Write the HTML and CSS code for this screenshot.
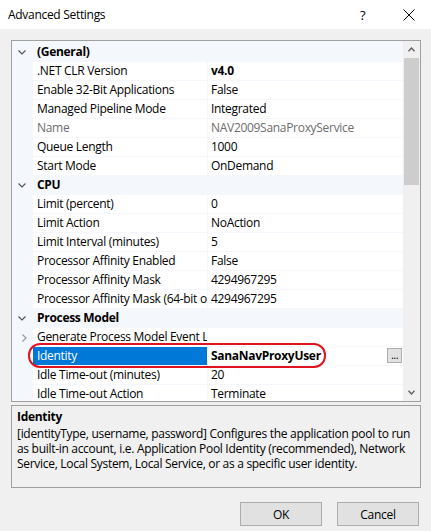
FILE: index.html
```html
<!DOCTYPE html>
<html>
<head>
<meta charset="utf-8">
<link rel="stylesheet" href="styles.css">
</head>
<body>
<div class="window">
  <div class="titlebar">
    <span class="title">Advanced Settings</span>
    <span class="help">?</span>
    <svg class="close" width="12" height="12" viewBox="0 0 12 12"><path d="M0.5 0.5 L11.5 11.5 M11.5 0.5 L0.5 11.5" stroke="#000" stroke-width="1" fill="none"/></svg>
  </div>
  <div class="content">
    <div class="grid-box">
      <div class="rows">
        <div class="row cat"><span class="glyph"><svg width="8" height="5" viewBox="0 0 8 5"><path d="M0.5 0.5 L4 4 L7.5 0.5" stroke="#555" stroke-width="1.2" fill="none"/></svg></span><span class="cat-name">(General)</span></div>
        <div class="row"><span class="glyph"></span><span class="name">.NET CLR Version</span><span class="val bold">v4.0</span></div>
        <div class="row"><span class="glyph"></span><span class="name">Enable 32-Bit Applications</span><span class="val">False</span></div>
        <div class="row"><span class="glyph"></span><span class="name">Managed Pipeline Mode</span><span class="val">Integrated</span></div>
        <div class="row disabled"><span class="glyph"></span><span class="name">Name</span><span class="val">NAV2009SanaProxyService</span></div>
        <div class="row"><span class="glyph"></span><span class="name">Queue Length</span><span class="val">1000</span></div>
        <div class="row"><span class="glyph"></span><span class="name">Start Mode</span><span class="val">OnDemand</span></div>
        <div class="row cat"><span class="glyph"><svg width="8" height="5" viewBox="0 0 8 5"><path d="M0.5 0.5 L4 4 L7.5 0.5" stroke="#555" stroke-width="1.2" fill="none"/></svg></span><span class="cat-name">CPU</span></div>
        <div class="row"><span class="glyph"></span><span class="name">Limit (percent)</span><span class="val">0</span></div>
        <div class="row"><span class="glyph"></span><span class="name">Limit Action</span><span class="val">NoAction</span></div>
        <div class="row"><span class="glyph"></span><span class="name">Limit Interval (minutes)</span><span class="val">5</span></div>
        <div class="row"><span class="glyph"></span><span class="name">Processor Affinity Enabled</span><span class="val">False</span></div>
        <div class="row"><span class="glyph"></span><span class="name">Processor Affinity Mask</span><span class="val">4294967295</span></div>
        <div class="row"><span class="glyph"></span><span class="name">Processor Affinity Mask (64-bit option)</span><span class="val">4294967295</span></div>
        <div class="row cat"><span class="glyph"><svg width="8" height="5" viewBox="0 0 8 5"><path d="M0.5 0.5 L4 4 L7.5 0.5" stroke="#555" stroke-width="1.2" fill="none"/></svg></span><span class="cat-name">Process Model</span></div>
        <div class="row"><span class="glyph"><svg class="expand" width="5" height="8" viewBox="0 0 5 8"><path d="M0.5 0.5 L4 4 L0.5 7.5" stroke="#999" stroke-width="1.2" fill="none"/></svg></span><span class="name">Generate Process Model Event Log Entry</span><span class="val"></span></div>
        <div class="row selected"><span class="glyph"></span><span class="name">Identity</span><span class="val bold">SanaNavProxyUser<span class="dots">...</span></span></div>
        <div class="row"><span class="glyph"></span><span class="name">Idle Time-out (minutes)</span><span class="val">20</span></div>
        <div class="row"><span class="glyph"></span><span class="name">Idle Time-out Action</span><span class="val">Terminate</span></div>
      </div>
      <div class="scrollbar">
        <div class="arrow"><svg width="7" height="5" viewBox="0 0 7 5"><path d="M0.5 4.2 L3.5 1 L6.5 4.2" stroke="#606060" stroke-width="1.4" fill="none"/></svg></div>
        <div class="track"><div class="thumb"></div></div>
        <div class="arrow"><svg width="7" height="5" viewBox="0 0 7 5"><path d="M0.5 0.8 L3.5 4 L6.5 0.8" stroke="#606060" stroke-width="1.4" fill="none"/></svg></div>
      </div>
      <div class="highlight"></div>
    </div>
    <div class="desc">
      <div class="desc-title">Identity</div>
      <div class="desc-text">[identityType, username, password] Configures the application pool to run<br>as built-in account, i.e. Application Pool Identity (recommended), Network<br>Service, Local System, Local Service, or as a specific user identity.</div>
    </div>
    <div class="buttons">
      <button class="btn">OK</button>
      <button class="btn">Cancel</button>
    </div>
  </div>
</div>
</body>
</html>
```

FILE: styles.css
```css
* { box-sizing: border-box; }
html, body { margin: 0; padding: 0; }
body {
  width: 431px;
  height: 531px;
  background: #f0f0f0;
  font-family: "Open Sans", "Noto Sans", sans-serif;
  font-size: 12px;
  color: #000;
  overflow: hidden;
  letter-spacing: -0.3px;
}
.window { width: 431px; height: 531px; display: flex; flex-direction: column; }
.titlebar {
  height: 29px;
  background: #fff;
  display: flex;
  align-items: center;
  padding-left: 8px;
  position: relative;
}
.title { font-size: 12px; flex: 1; }
.help { font-size: 13px; width: 14px; margin-right: 29px; }
.close { margin-right: 16px; }
.content { padding: 11px 10px 0 11px; display: flex; flex-direction: column; }
.grid-box {
  height: 362px;
  border: 1px solid #a0a0a0;
  background: #f4f7fc;
  display: flex;
  position: relative;
}
.rows {
  width: 391px;
  padding-top: 2px;
  overflow: hidden;
  display: flex;
  flex-direction: column;
}
.row {
  height: 19px;
  flex: none;
  display: flex;
}
.glyph {
  width: 21px;
  flex: none;
  display: flex;
  align-items: center;
  justify-content: center;
  height: 19px;
}
.row.cat .glyph { padding-bottom: 1px; justify-content: flex-start; padding-left: 6px; }
.glyph .expand { margin-left: 3px; }
.cat-name { font-weight: bold; padding-left: 4px; line-height: 18px; }
.name {
  width: 174px;
  flex: none;
  background: #fff;
  height: 18px;
  line-height: 18px;
  padding-left: 4px;
  white-space: nowrap;
  overflow: hidden;
}
.val {
  flex: 1;
  background: #fff;
  height: 18px;
  line-height: 18px;
  border-left: 1px solid #f4f7fc;
  padding-left: 3px;
  white-space: nowrap;
  overflow: hidden;
  position: relative;
}
.bold { font-weight: bold; }
.disabled .name, .disabled .val { color: #6d6d6d; }
.selected .name { background: #0078d7; color: #fff; }
.dots {
  position: absolute;
  right: 1px;
  top: 1px;
  width: 15px;
  height: 15px;
  background: #e1e1e1;
  border: 1px solid #adadad;
  font-weight: normal;
  font-size: 11px;
  line-height: 11px;
  text-align: center;
  letter-spacing: -0.5px;
}
.scrollbar {
  width: 17px;
  background: #f0f0f0;
  display: flex;
  flex-direction: column;
}
.arrow { height: 17px; display: flex; align-items: center; justify-content: center; }
.track { flex: 1; }
.thumb { height: 127px; margin: 0 1px; background: #cdcdcd; }
.highlight {
  position: absolute;
  left: 16px;
  top: 302px;
  width: 298px;
  height: 25px;
  border: 2px solid #e0141e;
  border-radius: 12px;
  pointer-events: none;
}
.desc {
  margin-top: 3px;
  height: 83px;
  border: 1px solid #a0a0a0;
  background: #f0f0f0;
  padding: 3px 5px 0 5px;
}
.desc-title { font-weight: bold; line-height: 15px; }
.desc-text { line-height: 15px; margin-top: 2px; white-space: nowrap; }
.buttons {
  margin-top: 14px;
  display: flex;
  justify-content: flex-end;
  gap: 15px;
  padding-right: 2px;
}
.btn {
  width: 82px;
  height: 24px;
  background: #e1e1e1;
  border: 1px solid #adadad;
  font-family: "Open Sans", "Noto Sans", sans-serif;
  font-size: 12px;
  letter-spacing: -0.3px;
  color: #000;
  padding: 0;
}
```
